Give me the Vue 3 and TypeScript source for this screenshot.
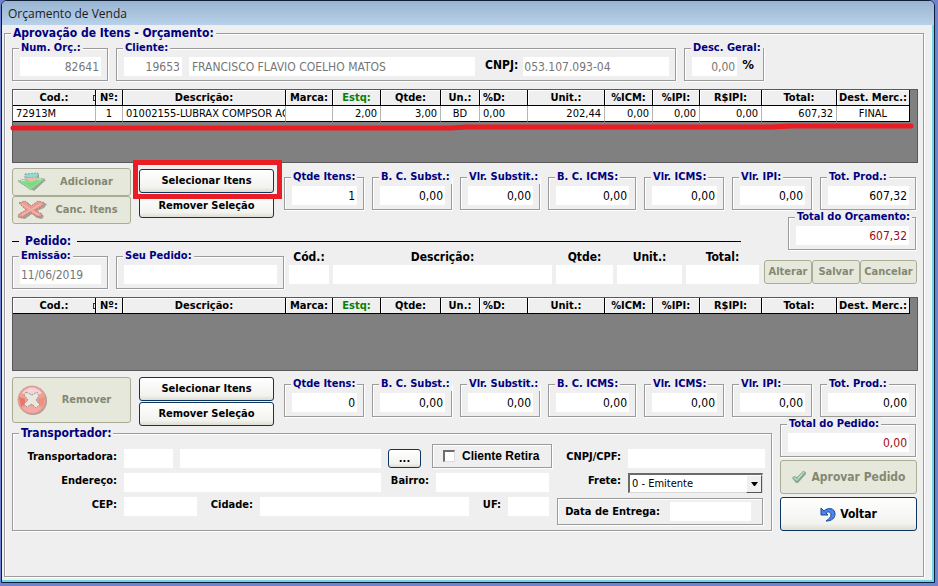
<script setup lang="ts">
import { ref } from 'vue'

interface Column {
  title: string
  width: number
  align: 'left' | 'center' | 'right'
  headLeft?: boolean
  green?: boolean
  mark?: boolean
}
interface Total {
  label: string
  value: string
}

const columns: Column[] = [
  { title: 'Cod.:', width: 83, align: 'left', mark: true },
  { title: 'Nº:', width: 27, align: 'center' },
  { title: 'Descrição:', width: 163, align: 'left' },
  { title: 'Marca:', width: 47, align: 'left' },
  { title: 'Estq:', width: 48, align: 'right', green: true },
  { title: 'Qtde:', width: 60, align: 'right' },
  { title: 'Un.:', width: 39, align: 'center' },
  { title: '%D:', width: 48, align: 'left', headLeft: true },
  { title: 'Unit.:', width: 77, align: 'right' },
  { title: '%ICM:', width: 48, align: 'right' },
  { title: '%IPI:', width: 47, align: 'right' },
  { title: 'R$IPI:', width: 62, align: 'right' },
  { title: 'Total:', width: 75, align: 'right' },
  { title: 'Dest. Merc.:', width: 73, align: 'center' },
]
const tableWidth = columns.reduce((sum, c) => sum + c.width, 0)

const quoteRows: string[][] = [
  ['72913M', '1', '01002155-LUBRAX COMPSOR AC', '', '2,00', '3,00', 'BD', '0,00', '202,44', '0,00', '0,00', '0,00', '607,32', 'FINAL'],
]

const quoteTotals: Total[] = [
  { label: 'Qtde Itens:', value: '1' },
  { label: 'B. C. Subst.:', value: '0,00' },
  { label: 'Vlr. Substit.:', value: '0,00' },
  { label: 'B. C. ICMS:', value: '0,00' },
  { label: 'Vlr. ICMS:', value: '0,00' },
  { label: 'Vlr. IPI:', value: '0,00' },
  { label: 'Tot. Prod.:', value: '607,32' },
]
const orderTotals: Total[] = quoteTotals.map((t) => ({
  label: t.label,
  value: t.label === 'Qtde Itens:' ? '0' : '0,00',
}))

const pickup = ref(false)
const freight = ref('0 - Emitente')
</script>

<template>
  <div class="desktop">
    <main class="window">
      <header class="titlebar">Orçamento de Venda</header>
      <div class="client">
        <fieldset class="group outer">
          <legend class="big">Aprovação de Itens - Orçamento:</legend>

          <div class="head-row">
            <fieldset class="group box">
              <legend><label for="num">Num. Orç.:</label></legend>
              <input id="num" class="num dim" value="82641" readonly />
            </fieldset>
            <fieldset class="group box">
              <legend><label for="cli">Cliente:</label></legend>
              <div class="client-row">
                <input id="cli" class="num dim" value="19653" readonly />
                <input class="dim name" aria-label="Nome do cliente" value="FRANCISCO FLAVIO COELHO MATOS" readonly />
                <label for="cnpj" class="cap">CNPJ:</label>
                <input id="cnpj" class="dim snug" value="053.107.093-04" readonly />
              </div>
            </fieldset>
            <fieldset class="group box">
              <legend><label for="desc">Desc. Geral:</label></legend>
              <div class="discount">
                <input id="desc" class="num dim" value="0,00" readonly />
                <span class="cap percent">%</span>
              </div>
            </fieldset>
          </div>

          <div class="grid-view">
            <table :style="{ width: (tableWidth / 904) * 100 + '%' }">
              <colgroup>
                <col v-for="c in columns" :key="c.title" :style="{ width: (c.width / tableWidth) * 100 + '%' }" />
              </colgroup>
              <thead>
                <tr>
                  <th v-for="c in columns" :key="c.title" :class="{ left: c.headLeft, green: c.green, mark: c.mark }">{{ c.title }}</th>
                </tr>
              </thead>
              <tbody>
                <tr v-for="(row, r) in quoteRows" :key="r">
                  <td v-for="(cell, i) in row" :key="i" :class="columns[i].align">{{ cell }}</td>
                </tr>
              </tbody>
            </table>
            <svg class="underline" viewBox="0 0 902 8" preserveAspectRatio="none" aria-hidden="true">
              <path d="M3 5H440L455 4H760L780 3H899" fill="none" stroke="#ea1c24" stroke-width="5" stroke-linecap="round" />
            </svg>
          </div>

          <section class="quote">
            <div class="actions">
              <div class="stack tight">
                <button class="btn off with-icon" disabled>
                  <svg viewBox="0 0 30 20" width="30" height="20" aria-hidden="true">
                    <path d="M2 10 9 8 9 3 22 2 22 7 29 8 17 19Z" fill="#9fa598" />
                    <path d="M1 9 8 7 14 9 20 6 28 7 14 18Z" fill="#8fd79a" stroke="#879a86" stroke-dasharray="1 1" />
                    <path d="M8 2 21 1 21 5 8 6Z" fill="#8fdcd6" stroke="#8d9f98" stroke-dasharray="2 1" />
                    <path d="M9 6 20 5 19 8 14 10 10 8Z" fill="#efb9a4" />
                    <path d="M6 10 13 11 23 8 14 15Z" fill="#72e074" />
                    <path d="M4 9 8 8M20 7 24 7" stroke="#d6f0d0" />
                  </svg>
                  <span>Adicionar</span>
                </button>
                <button class="btn off with-icon" disabled>
                  <svg viewBox="0 0 30 20" width="30" height="20" aria-hidden="true">
                    <path d="M4 4 10 2 16 7 23 2 30 4 27 8 20 11 27 16 25 19 20 18 15 14 8 19 2 18 4 14 10 11Z" fill="#aaa098" />
                    <path d="M2 3 8 1 14 6 21 1 28 3 24 7 18 10 25 14 24 17 19 16 13 12 6 17 1 17 2 14 9 10Z" fill="#ec9c92" stroke="#a8837c" stroke-dasharray="2 1" />
                    <path d="M5 4 13 9M24 4 5 15M15 11 22 15" stroke="#f6c1b8" stroke-width="1" />
                  </svg>
                  <span>Canc. Itens</span>
                </button>
              </div>
              <div class="stack pair">
                <div class="marked"><button class="btn">Selecionar Itens</button></div>
                <button class="btn">Remover Seleção</button>
              </div>
            </div>
            <div class="totals">
              <fieldset v-for="(t, i) in quoteTotals" :key="t.label" class="group box">
                <legend><label :for="'q' + i">{{ t.label }}</label></legend>
                <input :id="'q' + i" class="num" :value="t.value" readonly />
              </fieldset>
            </div>
            <fieldset class="group box grand">
              <legend><label for="totq">Total do Orçamento:</label></legend>
              <input id="totq" class="num red" value="607,32" readonly />
            </fieldset>
            <h2 class="divider"><span>Pedido:</span></h2>
          </section>

          <div class="order-row">
            <fieldset class="group box">
              <legend><label for="emi">Emissão:</label></legend>
              <input id="emi" class="dim snug" value="11/06/2019" readonly />
            </fieldset>
            <fieldset class="group box">
              <legend><label for="seu">Seu Pedido:</label></legend>
              <input id="seu" />
            </fieldset>
            <div class="item-fields">
              <div class="field"><label for="cod">Cód.:</label><input id="cod" /></div>
              <div class="field"><label for="dsc">Descrição:</label><input id="dsc" /></div>
              <div class="field"><label for="qtd">Qtde:</label><input id="qtd" class="num" /></div>
              <div class="field"><label for="uni">Unit.:</label><input id="uni" class="num" /></div>
              <div class="field"><label for="tot">Total:</label><input id="tot" class="num" /></div>
            </div>
            <div class="edit-buttons">
              <button class="btn off" disabled>Alterar</button>
              <button class="btn off" disabled>Salvar</button>
              <button class="btn off" disabled>Cancelar</button>
            </div>
          </div>

          <div class="grid-view">
            <table :style="{ width: (tableWidth / 904) * 100 + '%' }">
              <colgroup>
                <col v-for="c in columns" :key="c.title" :style="{ width: (c.width / tableWidth) * 100 + '%' }" />
              </colgroup>
              <thead>
                <tr>
                  <th v-for="c in columns" :key="c.title" :class="{ left: c.headLeft, green: c.green, mark: c.mark }">{{ c.title }}</th>
                </tr>
              </thead>
            </table>
          </div>

          <section class="order">
            <div class="actions">
              <div class="stack">
                <button class="btn off with-icon tall" disabled>
                  <svg viewBox="0 0 30 30" width="30" height="30" aria-hidden="true">
                    <circle cx="16" cy="16" r="14" fill="#a9a39c" />
                    <circle cx="15" cy="15" r="14" fill="#eea093" stroke="#b58d86" stroke-dasharray="1 1" />
                    <path d="M5 8Q15-3 25 8L20 11 15 9 10 11Z" fill="#f5d3d8" />
                    <path d="M2 12 8 14 8 19 4 22Z" fill="#e8766a" />
                    <path d="M28 12 21 14 22 19 26 22Z" fill="#ef8f80" />
                    <path d="M6 23Q15 32 24 23L19 20 15 22 10 20Z" fill="#f3aaa8" />
                    <path d="M9 7 15 10 20 7 22 11 19 15 23 20 19 23 15 19 10 22 7 19 11 15 7 10Z" fill="#e8e9de" stroke="#a3908c" stroke-dasharray="2 1" />
                  </svg>
                  <span>Remover</span>
                </button>
              </div>
              <div class="stack pair">
                <button class="btn">Selecionar Itens</button>
                <button class="btn">Remover Seleção</button>
              </div>
            </div>
            <div class="totals">
              <fieldset v-for="(t, i) in orderTotals" :key="t.label" class="group box">
                <legend><label :for="'o' + i">{{ t.label }}</label></legend>
                <input :id="'o' + i" class="num" :value="t.value" readonly />
              </fieldset>
            </div>

            <fieldset class="group carrier">
              <legend class="big">Transportador:</legend>
              <div class="carrier-body">
                <div class="lines">
                  <div class="line l1">
                    <label for="tr">Transportadora:</label>
                    <input id="tr" />
                    <input aria-label="Nome da transportadora" />
                    <button class="btn dots">...</button>
                    <label class="check"><input v-model="pickup" type="checkbox" />Cliente Retira</label>
                  </div>
                  <div class="line l2">
                    <label for="end">Endereço:</label>
                    <input id="end" />
                    <label for="bai">Bairro:</label>
                    <input id="bai" />
                  </div>
                  <div class="line l3">
                    <label for="cep">CEP:</label>
                    <input id="cep" />
                    <label for="cid">Cidade:</label>
                    <input id="cid" />
                    <label for="uf">UF:</label>
                    <input id="uf" />
                  </div>
                </div>
                <div class="lines">
                  <div class="line r1"><label for="cpf">CNPJ/CPF:</label><input id="cpf" /></div>
                  <div class="line r1">
                    <label for="fre">Frete:</label>
                    <div class="combo">
                      <select id="fre" v-model="freight">
                        <option>0 - Emitente</option>
                        <option>1 - Destinatário</option>
                      </select>
                      <span class="drop" aria-hidden="true">
                        <svg viewBox="0 0 7 4" width="7" height="4"><path d="M0 0H7L4 4H3Z" /></svg>
                      </span>
                    </div>
                  </div>
                  <div class="delivery"><label for="dat">Data de Entrega:</label><input id="dat" /></div>
                </div>
              </div>
            </fieldset>

            <div class="side">
              <fieldset class="group box">
                <legend><label for="toto">Total do Pedido:</label></legend>
                <input id="toto" class="num red" value="0,00" readonly />
              </fieldset>
              <button class="btn off large" disabled>
                <svg viewBox="0 0 16 14" width="16" height="14" aria-hidden="true">
                  <path d="M1 8 3 6 6 7 12 1 15 2 15 4 7 13 5 13Z" fill="#8fa294" />
                  <path d="M2 8 4 7 6 9 12 2 14 2 6 11Z" fill="#a3e3ac" />
                  <path d="M7 8 11 4" stroke="#cdeedd" />
                </svg>
                Aprovar Pedido
              </button>
              <button class="btn large">
                <svg viewBox="0 0 16 15" width="16" height="15" aria-hidden="true">
                  <path d="M1 1V8H8L6 6C8 4 11 5 11 8 11 10 9 12 6 14 12 14 15 11 15 7 15 1 8 0 4 4Z" fill="#4a86ea" stroke="#1b479f" />
                </svg>
                Voltar
              </button>
            </div>
          </section>
        </fieldset>
      </div>
    </main>
  </div>
</template>

<style>
body {
  background: #7083cf;
}
</style>

<style scoped>
.desktop {
  box-sizing: border-box;
  min-height: 100vh;
  padding: 0 3px 3px 1px;
  display: flex;
  background: #7083cf;
  font: 11px/14px 'DejaVu Sans Condensed', 'DejaVu Sans', sans-serif;
  color: #000;
}
.desktop *,
.desktop *::before {
  box-sizing: border-box;
}
.window {
  flex: 1;
  min-width: 0;
  display: flex;
  flex-direction: column;
  border: 1px solid #0b1c33;
  border-right-color: #0b1c33;
  border-radius: 6px 6px 0 0;
  overflow: hidden;
  background: #efefef;
  box-shadow: inset -2px -2px 0 #6fd6ea;
}
.titlebar {
  height: 24px;
  padding-left: 6px;
  background: linear-gradient(#98b4d0, #b9d1ea);
  font: 12px/25px 'Open Sans', 'Noto Sans', sans-serif;
  color: #1c1c1c;
}
.client {
  flex: 1;
  display: flex;
  padding: 0 10px 5px 2px;
}
.group {
  min-width: 0;
  margin: 0;
  padding: 0;
  border: 1px solid #9b9b9b;
  box-shadow: 1px 1px 0 #fff, inset 1px 1px 0 #fff;
}
legend {
  height: 14px;
  margin-left: -1px;
  padding: 0 2px;
  line-height: 14px;
  font-weight: bold;
  color: #000080;
  background: #efefef;
  white-space: nowrap;
}
legend.big {
  height: 16px;
  line-height: 16px;
  font-size: 12px;
}
.outer {
  flex: 1;
  padding: 0 5px 0 7px;
}
.box {
  padding: 2px 6px 4px 7px;
}
input {
  display: block;
  width: 100%;
  min-width: 0;
  height: 19px;
  margin: 0;
  padding: 0 3px;
  border: 0;
  border-radius: 0;
  background: #fff;
  font: inherit;
  font-size: 12px;
  color: #000;
}
.num {
  text-align: right;
}
.box input.num {
  padding-right: 2px;
}
input.snug {
  padding-left: 1px;
}
.dim {
  color: #767676;
}
.red {
  color: #a00a14;
}
.cap {
  font-weight: bold;
  font-size: 12px;
  line-height: 16px;
}
.percent {
  font-size: 13px;
}
.head-row {
  display: grid;
  grid-template-columns: 96fr 560fr 80fr 146fr;
  gap: 8px;
}
.client-row {
  display: grid;
  grid-template-columns: 58fr 289fr 38fr 146fr;
  column-gap: 5px;
}
.client-row .name {
  margin-left: 2px;
  width: auto;
}
.client-row .cap {
  text-align: right;
}
.discount {
  display: grid;
  grid-template-columns: 46fr 15fr;
  gap: 5px;
}
.grid-view {
  position: relative;
  height: 74px;
  margin-top: 8px;
  border: 1px solid #585858;
  background: #808080;
}
table {
  table-layout: fixed;
  border-collapse: separate;
  border-spacing: 0;
}
th,
td {
  overflow: hidden;
  white-space: nowrap;
  height: 16px;
  line-height: 14px;
}
th {
  padding: 0;
  background: #efefef;
  border-right: 1px solid #000;
  border-bottom: 1px solid #000;
  box-shadow: inset 1px 1px 0 #fff;
  text-align: center;
}
th.left {
  padding-left: 3px;
  text-align: left;
}
th.green {
  color: #078007;
}
th.mark {
  position: relative;
}
th.mark::before {
  content: '';
  position: absolute;
  right: 0;
  top: 5px;
  width: 2px;
  height: 6px;
  border: 1px solid #333;
  border-right: 0;
}
td {
  padding: 0 3px;
  background: #fff;
  border-right: 1px solid #b5b5b5;
  border-bottom: 1px solid #000;
}
td:last-child {
  border-right-color: #000;
}
td.left {
  padding-right: 0;
  text-align: left;
}
td.center {
  text-align: center;
}
td.right {
  text-align: right;
}
.underline {
  position: absolute;
  left: -3px;
  top: 33px;
  width: 100%;
  height: 8px;
}
.btn {
  display: flex;
  align-items: center;
  justify-content: center;
  min-width: 0;
  height: 24px;
  margin: 0;
  padding: 0;
  border: 1px solid #0c3560;
  border-radius: 3px;
  background: linear-gradient(#fff, #f2f2ee 80%, #deddd2);
  font: bold 11px/14px 'DejaVu Sans Condensed', 'DejaVu Sans', sans-serif;
  color: #000;
  white-space: nowrap;
}
.btn.off {
  border-color: #a9ad93;
  background: #e6e8dc;
  color: #848872;
}
.with-icon {
  height: 28px;
  padding: 0 4px;
}
.with-icon span {
  flex: 1;
}
.with-icon.tall {
  height: 46px;
}
.quote {
  display: grid;
  grid-template: 42px 23px 16px / 272fr 504fr 130fr;
  grid-template-areas: 'act tot tot' 'act . grand' 'div div grand';
  margin-top: 5px;
}
.actions {
  grid-area: act;
  display: grid;
  grid-template-columns: 119fr 135fr;
  gap: 8px;
  align-items: start;
  margin-right: 10px;
}
.stack {
  display: grid;
  gap: 1px;
}
.stack.tight {
  gap: 0;
}
.quote .pair {
  padding-top: 1px;
}
.marked {
  position: relative;
  z-index: 1;
  display: grid;
}
.marked::before {
  content: '';
  position: absolute;
  inset: -9px -8px -6px -6px;
  border: 5px solid #ea1c24;
}
.totals {
  grid-area: tot;
  display: grid;
  grid-template-columns: 80fr 80fr 80fr 88fr 80fr 80fr 96fr;
  gap: 8px;
  padding-right: 2px;
  align-self: end;
}
.grand {
  grid-area: grand;
  height: 40px;
  margin-right: 2px;
}
.divider {
  grid-area: div;
  display: flex;
  align-items: center;
  gap: 6px;
  width: 94%;
  margin: 0;
  font-size: 12px;
  line-height: 16px;
  color: #000080;
}
.divider::before,
.divider::after {
  content: '';
  height: 1px;
  background: #000;
}
.divider::before {
  width: 7px;
}
.divider::after {
  flex: 1;
}
.order-row {
  display: grid;
  grid-template-columns: 104fr 173fr 475fr 153fr;
  padding-right: 1px;
}
.order-row .box:first-child {
  margin-right: 8px;
}
.order-row .box:nth-child(2) {
  margin-right: 5px;
}
.item-fields {
  display: grid;
  grid-template-columns: 40fr 219fr 57fr 65fr 73fr;
  gap: 4px;
  margin-right: 5px;
}
.field label {
  display: block;
  font-weight: bold;
  font-size: 12px;
  line-height: 16px;
  text-align: center;
}
.edit-buttons {
  display: grid;
  grid-template-columns: 48fr 48fr 57fr;
  align-items: start;
  padding-top: 11px;
}
.order {
  display: grid;
  grid-template: 40px 8px auto / 272fr 488fr 146fr;
  grid-template-areas: 'act tot tot' 'act . side' 'car car side';
  margin-top: 6px;
}
.carrier {
  grid-area: car;
}
.carrier legend {
  margin-left: 6px;
}
.carrier-body {
  display: grid;
  grid-template-columns: 539fr 213fr;
  padding: 8px 6px 4px 0;
}
.lines {
  display: grid;
  gap: 5px;
  align-content: start;
}
.line {
  display: grid;
  gap: 7px;
  height: 19px;
}
.line label,
.delivery label {
  font-weight: bold;
  line-height: 15px;
  text-align: right;
  white-space: nowrap;
}
.l1 {
  grid-template-columns: 104fr 49fr 201fr 33fr 124fr;
}
.l2 {
  grid-template-columns: 104fr 257fr 41fr 113fr;
  padding-right: 3px;
}
.l3 {
  grid-template-columns: 104fr 73fr 49fr 209fr 25fr 41fr;
  padding-right: 3px;
}
.r1 {
  grid-template-columns: 69fr 137fr;
}
.btn.dots {
  height: 19px;
}
.line .check {
  display: flex;
  align-items: center;
  gap: 7px;
  height: 24px;
  margin: -5px 0 0 4px;
  padding-left: 10px;
  border: 1px solid #9b9b9b;
  box-shadow: 1px 1px 0 #fff, inset 1px 1px 0 #fff;
  font: bold 12px/14px 'Liberation Sans', sans-serif;
}
.check input {
  appearance: none;
  width: 12px;
  height: 12px;
  padding: 0;
  border: 1px solid #dcdcdc;
  border-top: 2px solid #6e6e6e;
  border-left: 2px solid #6e6e6e;
}
.combo {
  position: relative;
  margin-right: 2px;
}
.combo select {
  appearance: none;
  display: block;
  width: 100%;
  height: 20px;
  margin: 0;
  padding: 0 20px 0 2px;
  border: 1px solid #d8d8d8;
  border-top: 2px solid #6a6a6a;
  border-left: 2px solid #6a6a6a;
  border-radius: 0;
  background: #fff;
  font: inherit;
  color: #000;
}
.drop {
  position: absolute;
  top: 2px;
  right: 1px;
  bottom: 0;
  width: 16px;
  display: flex;
  align-items: center;
  justify-content: center;
  border: 1px solid #fff;
  border-right-color: #555;
  border-bottom-color: #555;
  background: #efefef;
  pointer-events: none;
}
.delivery {
  display: grid;
  grid-template-columns: 102fr 81fr;
  gap: 10px;
  align-items: center;
  height: 27px;
  margin: 1px 2px 0 5px;
  padding-right: 11px;
  border: 1px solid #9b9b9b;
  box-shadow: 1px 1px 0 #fff, inset 1px 1px 0 #fff;
}
.side {
  grid-area: side;
  display: grid;
  gap: 3px;
  align-content: start;
  margin: 0 1px 0 8px;
}
.side .group {
  margin-right: 1px;
}
.btn.large {
  height: 34px;
  gap: 4px;
  font-size: 12px;
}
</style>
